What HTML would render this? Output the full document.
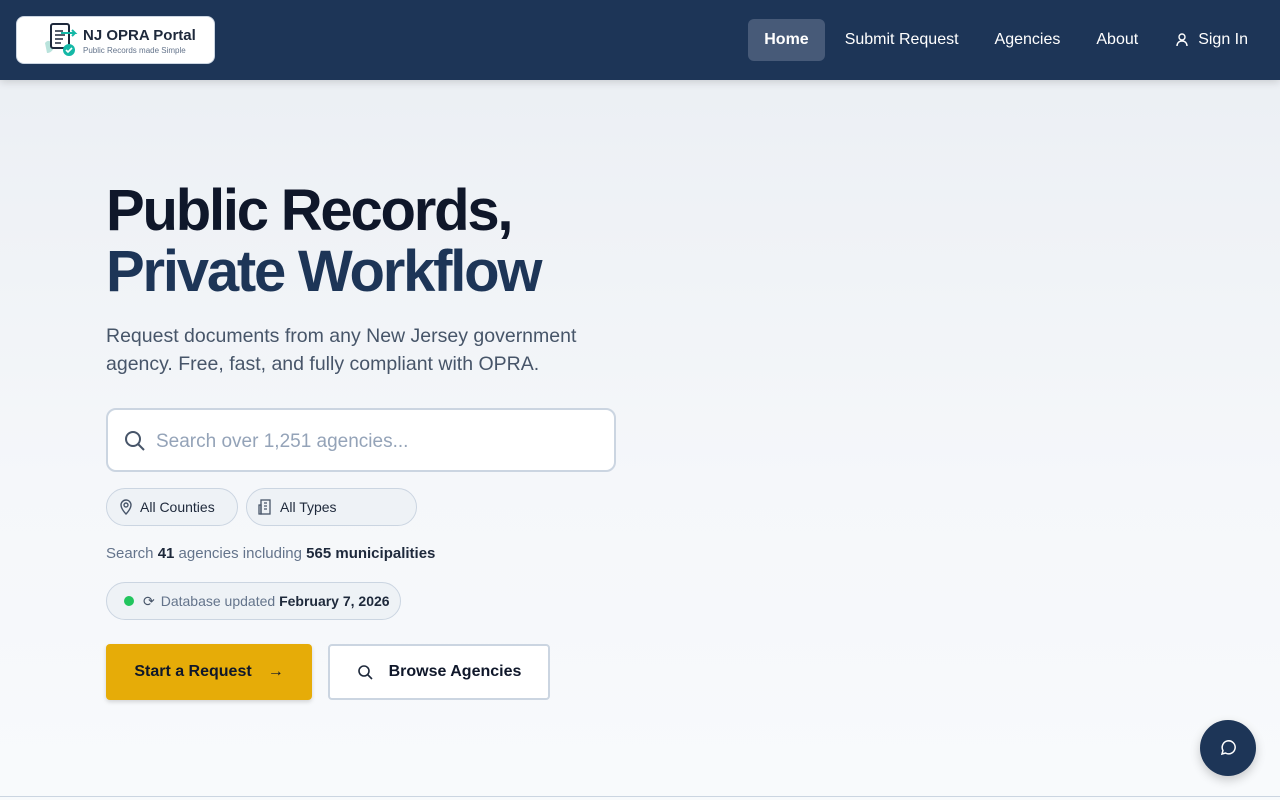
<!DOCTYPE html>
<html><head><meta charset="utf-8"><style>
*{box-sizing:border-box;margin:0;padding:0}
body{width:1280px;height:800px;overflow:hidden;font-family:"Liberation Sans","DejaVu Sans",sans-serif;background:linear-gradient(180deg,#eaeef3 0%,#f5f7fa 60%,#f8fafc 100%);position:relative}
header{height:80px;background:#1d3557;position:relative;box-shadow:0 2px 8px rgba(0,0,0,.15)}
.logo{position:absolute;left:16px;top:16px;width:199px;height:48px;background:#fff;border-radius:8px;border:1px solid #cbd5e1}
nav{position:absolute;right:16px;top:19px;display:flex;gap:0;align-items:center}
nav a{color:#fff;font-size:16px;padding:11px 16px;height:42px;display:flex;align-items:center;margin-left:4px}
nav a.act{background:#475a78;border-radius:6px;font-weight:bold}
h1{position:absolute;left:106px;top:180px;font-size:58px;line-height:61px;font-weight:bold;color:#0f172a;letter-spacing:-2.2px}
h1 span{color:#1d3557}
.sub{position:absolute;left:106px;top:322px;font-size:19.5px;line-height:28px;color:#475569;width:520px}
.search{position:absolute;left:106px;top:408px;width:510px;height:64px;background:#fff;border:2px solid #cbd5e1;border-radius:10px}
.search span{position:absolute;left:48px;top:21px;font-size:19px;color:#94a3b8}
.pill{position:absolute;height:38px;border:1px solid #cbd5e1;border-radius:19px;background:#eef2f6;font-size:14px;color:#1e293b;display:flex;align-items:center}
.stat{position:absolute;left:106px;top:545px;font-size:15px;color:#64748b}
.stat b{color:#1e293b}
.btn{position:absolute;top:644px;height:56px;border-radius:4px;font-size:16px;font-weight:bold;display:flex;align-items:center;justify-content:center;color:#0f172a}
.chat{position:absolute;left:1200px;top:720px;width:56px;height:56px;border-radius:50%;background:#1d3557;box-shadow:0 4px 10px rgba(0,0,0,.2)}
</style></head><body>
<header>
<div class="logo">
<svg width="40" height="40" style="position:absolute;left:24px;top:4px" viewBox="0 0 40 40"><path d="M4 22c3-4 6-2 8 2s-2 8-6 8z" fill="#b9e3dc"/><rect x="10" y="3" width="18" height="24" rx="2" fill="#fff" stroke="#1e293b" stroke-width="2"/><path d="M14 10h8M14 14h10M14 18h8M14 22h6" stroke="#1e293b" stroke-width="1.5"/><path d="M20 12h14l-3-3M34 12l-3 3" stroke="#14b8a6" stroke-width="2" fill="none"/><circle cx="28" cy="29" r="6" fill="#14b8a6"/><path d="M25 29l2 2 4-4" stroke="#fff" stroke-width="1.6" fill="none"/></svg>
<div style="position:absolute;left:66px;top:10px;font-size:15px;font-weight:bold;color:#1e293b">NJ OPRA Portal</div>
<div style="position:absolute;left:66px;top:29px;font-size:8px;color:#64748b">Public Records made Simple</div>
</div>
<nav><a class="act">Home</a><a>Submit Request</a><a>Agencies</a><a>About</a><a><svg width="16" height="16" viewBox="0 0 16 16" style="margin-right:8px" fill="none" stroke="#fff" stroke-width="1.4"><circle cx="8" cy="5" r="3"/><path d="M3 14c0-3 2-5 5-5s5 2 5 5"/></svg>Sign In</a></nav>
</header>
<h1>Public Records,<br><span>Private Workflow</span></h1>
<div class="sub">Request documents from any New Jersey government agency. Free, fast, and fully compliant with OPRA.</div>
<div class="search"><svg width="22" height="22" viewBox="0 0 22 22" style="position:absolute;left:16px;top:20px" fill="none" stroke="#475569" stroke-width="2"><circle cx="9" cy="9" r="7"/><path d="M14 14l6 6"/></svg><span>Search over 1,251 agencies...</span></div>
<div class="pill" style="left:106px;top:488px;width:132px;padding-left:12px"><svg width="14" height="16" viewBox="0 0 14 16" fill="none" stroke="#475569" stroke-width="1.4" style="margin-right:7px"><path d="M7 15s5-5 5-9A5 5 0 0 0 2 6c0 4 5 9 5 9z"/><circle cx="7" cy="6" r="2"/></svg>All Counties</div>
<div class="pill" style="left:246px;top:488px;width:171px;padding-left:11px"><svg width="14" height="16" viewBox="0 0 14 16" fill="none" stroke="#475569" stroke-width="1.3" style="margin-right:8px"><rect x="3" y="1" width="9" height="14"/><path d="M1 6h2v9H1zM6 4h3M6 7h3M6 10h3"/></svg>All Types</div>
<div class="stat">Search <b>41</b> agencies including <b>565 municipalities</b></div>
<div class="pill" style="left:106px;top:582px;width:295px;padding-left:17px;color:#64748b"><span style="width:10px;height:10px;border-radius:50%;background:#22c55e;margin-right:9px"></span><span style="font-size:14px;margin-right:6px;color:#475569">⟳</span>Database updated&nbsp;<b style="color:#1e293b">February 7, 2026</b></div>
<div class="btn" style="left:106px;width:206px;background:#e6ac08;box-shadow:0 2px 4px rgba(0,0,0,.15)">Start a Request<span style="margin-left:16px">→</span></div>
<div class="btn" style="left:328px;width:222px;background:#fff;border:2px solid #cbd5e1"><svg width="16" height="16" viewBox="0 0 16 16" fill="none" stroke="#1e293b" stroke-width="1.6" style="margin-right:16px"><circle cx="7" cy="7" r="5"/><path d="M11 11l4 4"/></svg>Browse Agencies</div>
<div class="chat"><svg width="18" height="18" viewBox="0 0 18 18" style="position:absolute;left:19px;top:19px" fill="none" stroke="#fff" stroke-width="1.5"><path d="M3 15l1-3.5A6.5 6.5 0 1 1 6.5 14z"/></svg></div>
<div style="position:absolute;left:0;top:796px;width:1280px;height:1px;background:#cbd5e1"></div>
</body></html>
